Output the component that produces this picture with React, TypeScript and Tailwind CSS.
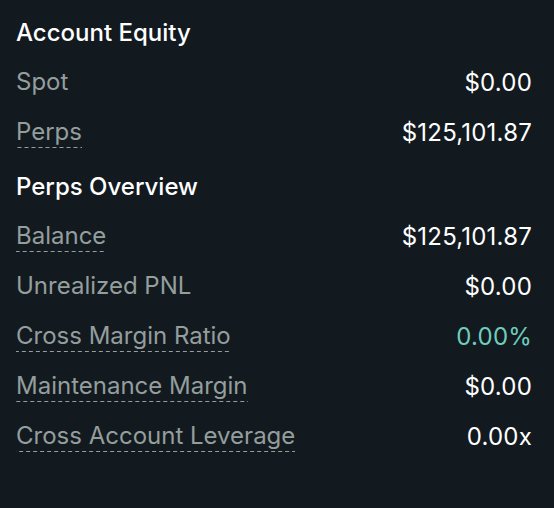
type Row = { label: string; value: string; dashed?: boolean; accent?: boolean };

const equity: Row[] = [
  { label: 'Spot', value: '$0.00' },
  { label: 'Perps', value: '$125,101.87', dashed: true },
];

const overview: Row[] = [
  { label: 'Balance', value: '$125,101.87', dashed: true },
  { label: 'Unrealized PNL', value: '$0.00' },
  { label: 'Cross Margin Ratio', value: '0.00%', dashed: true, accent: true },
  { label: 'Maintenance Margin', value: '$0.00', dashed: true },
  { label: 'Cross Account Leverage', value: '0.00x', dashed: true },
];

function StatRow({ row }: { row: Row }) {
  return (
    <div className="flex h-[50px] items-center justify-between">
      <span
        className={
          row.dashed
            ? 'inline-block bg-[linear-gradient(to_right,#949e9c_4px,transparent_4px)] bg-[length:7px_1.5px] bg-bottom bg-repeat-x pb-[2px] leading-[28px] text-[#949e9c]'
            : 'inline-block pb-[2px] leading-[28px] text-[#949e9c]'
        }
      >
        {row.label}
      </span>
      <span className={row.accent ? 'tracking-[0.2px] text-[#6fcdbd]' : 'tracking-[0.2px] text-white'}>
        {row.value}
      </span>
    </div>
  );
}

export default function App() {
  return (
    <div
      className="h-[508px] w-[554px] bg-[#121a20] pl-4 pr-[22px] pt-2 text-[24px]"
      style={{ fontFamily: 'Inter, "Noto Sans", sans-serif' }}
    >
      <div className="flex h-[50px] items-center font-medium text-white">Account Equity</div>
      {equity.map((r) => (
        <StatRow key={r.label} row={r} />
      ))}
      <div className="mt-1 flex h-[50px] items-center font-medium text-white">Perps Overview</div>
      {overview.map((r) => (
        <StatRow key={r.label} row={r} />
      ))}
    </div>
  );
}
